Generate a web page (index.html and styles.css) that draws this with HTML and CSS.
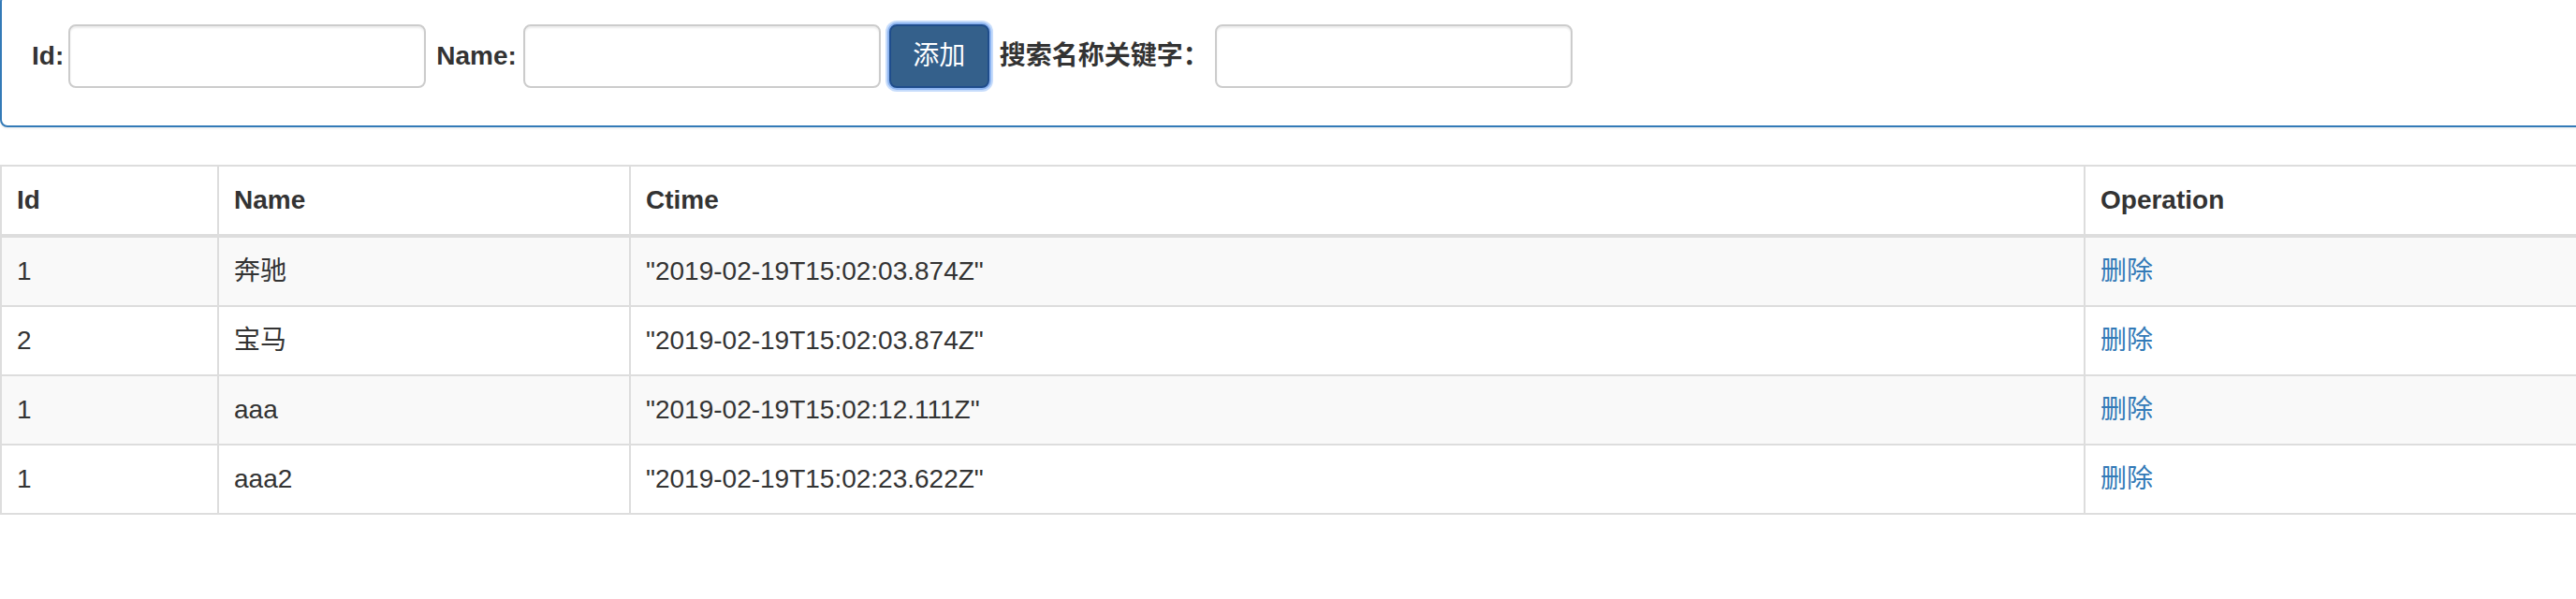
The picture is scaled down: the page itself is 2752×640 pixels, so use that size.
FILE: index.html
```html
<!DOCTYPE html>
<html lang="zh">
<head>
<meta charset="utf-8">
<title>品牌列表</title>
<link rel="stylesheet" href="styles.css">
</head>
<body>
<div class="page">
  <div class="panel">
    <div class="panel-body">
      <form class="form-inline">
        <label class="lbl lbl-id">Id:</label>
        <input class="form-control" type="text">
        <label class="lbl lbl-name">Name:</label>
        <input class="form-control form-name" type="text">
        <button class="btn" type="button">添加</button>
        <label class="lbl lbl-search">搜索名称关键字：</label>
        <input class="form-control" type="text">
      </form>
    </div>
  </div>
  <table class="table">
    <colgroup>
      <col class="c-id">
      <col class="c-name">
      <col class="c-time">
      <col>
    </colgroup>
    <thead>
      <tr><th>Id</th><th>Name</th><th>Ctime</th><th>Operation</th></tr>
    </thead>
    <tbody>
      <tr><td>1</td><td>奔驰</td><td>"2019-02-19T15:02:03.874Z"</td><td><a href="#">删除</a></td></tr>
      <tr><td>2</td><td>宝马</td><td>"2019-02-19T15:02:03.874Z"</td><td><a href="#">删除</a></td></tr>
      <tr><td>1</td><td>aaa</td><td>"2019-02-19T15:02:12.111Z"</td><td><a href="#">删除</a></td></tr>
      <tr><td>1</td><td>aaa2</td><td>"2019-02-19T15:02:23.622Z"</td><td><a href="#">删除</a></td></tr>
    </tbody>
  </table>
</div>
</body>
</html>
```
FILE: styles.css
```css
html, body {
  margin: 0;
  overflow: hidden;
}
body {
  font-family: "Liberation Sans", "Noto Sans CJK SC", sans-serif;
  font-size: 28px;
  line-height: 40px;
  color: #333;
  background: #fff;
}
.page {
  width: 2760px;
}
.panel {
  margin: -6px 0 40px;
  border: 2px solid #337ab7;
  border-radius: 8px;
  background: #fff;
  box-shadow: 0 2px 2px rgba(0, 0, 0, 0.05);
}
.panel-body {
  padding: 30px 0 40px 32px;
}
.form-inline {
  display: flex;
  align-items: center;
  margin: 0;
  height: 68px;
}
.lbl {
  font-weight: bold;
  white-space: nowrap;
}
.lbl-id { margin-right: 5px; }
.lbl-name { margin: 0 7px 0 11px; }
.lbl-search { margin: 0 6px 0 11px; }
.form-control {
  box-sizing: border-box;
  width: 382px;
  height: 68px;
  margin: 0;
  padding: 12px 24px;
  border: 2px solid #ccc;
  border-radius: 8px;
  background: #fff;
  box-shadow: inset 0 2px 2px rgba(0, 0, 0, 0.075);
  font: inherit;
  color: #555;
}
.btn {
  box-sizing: border-box;
  width: 107px;
  height: 68px;
  margin-left: 9px;
  padding: 0;
  border: 2px solid #1f4d8c;
  border-radius: 8px;
  background: #34608b;
  color: #fff;
  font-family: "Liberation Sans", "Noto Sans CJK SC", sans-serif;
  font-size: 28px;
  line-height: 40px;
  box-shadow: 0 0 0 2px #8db4f0, 0 0 0 4px rgba(160, 196, 248, 0.6);
}
.table {
  width: 100%;
  border-collapse: collapse;
  table-layout: fixed;
  border: 2px solid #ddd;
}
.c-id { width: 232px; }
.c-name { width: 440px; }
.c-time { width: 1554px; }
.table th,
.table td {
  padding: 16px;
  border: 2px solid #ddd;
  text-align: left;
  vertical-align: top;
  line-height: 40px;
  white-space: nowrap;
}
.table th {
  font-weight: bold;
  border-bottom-width: 4px;
}
.table tbody tr:nth-child(odd) {
  background: #f9f9f9;
}
.table a {
  color: #337ab7;
  text-decoration: none;
}
```
